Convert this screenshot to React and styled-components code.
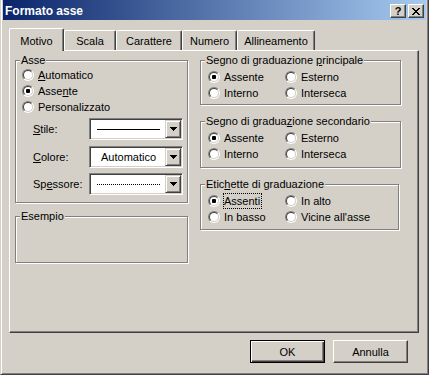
import React from "react";
import styled, { createGlobalStyle } from "styled-components";

const GlobalStyle = createGlobalStyle`
  html, body {
    margin: 0;
    padding: 0;
    background: #d4d0c8;
  }
  body {
    font-family: "Liberation Sans", Arial, sans-serif;
    font-size: 11px;
    color: #000;
  }
`;

const Window = styled.div`
  box-sizing: border-box;
  width: 429px;
  height: 375px;
  background: #d4d0c8;
  border-left: 1px solid #d4d0c8;
  border-right: 1px solid #404040;
  border-bottom: 1px solid #404040;
  box-shadow: inset 1px 0 #fff, inset -1px -1px #808080;
  padding: 0 2px 1px 2px;
  display: flex;
  flex-direction: column;
`;

const TitleBar = styled.div`
  height: 20px;
  display: flex;
  align-items: flex-start;
  padding: 0 2px 0 2px;
  background: linear-gradient(to right, #0a246a, #a6caf0);
`;

const TitleText = styled.div`
  flex: 1;
  padding-top: 3px;
  line-height: 16px;
  font-size: 12px;
  font-weight: bold;
  color: #fff;
`;

const CaptionButton = styled.div`
  box-sizing: border-box;
  width: 16px;
  height: 14px;
  margin-top: 4px;
  margin-left: 2px;
  background: #d4d0c8;
  border: 1px solid;
  border-color: #fff #404040 #404040 #fff;
  box-shadow: inset -1px -1px #808080;
  display: flex;
  align-items: center;
  justify-content: center;
  font-size: 11px;
  font-weight: bold;
  line-height: 12px;
`;

const Body = styled.div`
  flex: 1;
  display: flex;
  flex-direction: column;
  padding: 8px 7px 0 6px;
`;

const TabStrip = styled.div`
  height: 22px;
  display: flex;
  align-items: flex-end;
`;

const Tab = styled.div`
  box-sizing: border-box;
  position: relative;
  z-index: ${(p) => (p.$active ? 1 : 0)};
  width: ${(p) => p.$w}px;
  height: ${(p) => (p.$active ? 23 : 20)}px;
  margin-bottom: ${(p) => (p.$active ? -1 : 0)}px;
  padding-top: ${(p) => (p.$active ? 3 : 1)}px;
  line-height: 18px;
  text-align: center;
  white-space: nowrap;
  background: #d4d0c8;
  border-left: 1px solid #fff;
  border-top: 1px solid #fff;
  border-right: 1px solid #404040;
  border-radius: 2px 2px 0 0;
  box-shadow: inset -1px 0 #808080;
`;

const Panel = styled.div`
  box-sizing: border-box;
  height: 283px;
  display: flex;
  gap: 12px;
  padding: 9px 0 0 5px;
  border-top: 1px solid #fff;
  border-left: 1px solid #fff;
  border-right: 1px solid #404040;
  border-bottom: 1px solid #404040;
  box-shadow: inset -1px -1px #808080;
`;

const Column = styled.div`
  display: flex;
  flex-direction: column;
  gap: ${(p) => p.$gap}px;
`;

const Group = styled.div`
  box-sizing: border-box;
  position: relative;
  width: ${(p) => p.$w}px;
  height: ${(p) => p.$h}px;
  padding: ${(p) => p.$pad || "0"};
  border: 1px solid #808080;
  box-shadow: inset 1px 1px #fff, 1px 1px #fff;
`;

const Legend = styled.div`
  position: absolute;
  top: -7px;
  left: 4px;
  padding: 0 1px;
  line-height: 13px;
  background: #d4d0c8;
  white-space: nowrap;
`;

const RadioGrid = styled.div`
  display: grid;
  grid-template-columns: 77px auto;
  grid-auto-rows: 16px;
`;

const RadioRow = styled.div`
  height: 16px;
  display: flex;
  align-items: center;
  white-space: nowrap;
`;

const RadioOuter = styled.span`
  box-sizing: border-box;
  flex: none;
  width: 12px;
  height: 12px;
  border-radius: 50%;
  border: 1px solid;
  border-color: #808080 #fff #fff #808080;
  display: flex;
`;

const RadioInner = styled.span`
  box-sizing: border-box;
  width: 10px;
  height: 10px;
  border-radius: 50%;
  border: 1px solid;
  border-color: #404040 #d4d0c8 #d4d0c8 #404040;
  background: #fff;
  display: flex;
  align-items: center;
  justify-content: center;
`;

const RadioDot = styled.span`
  width: 4px;
  height: 4px;
  border-radius: 1px;
  background: #000;
`;

const RadioLabel = styled.span`
  box-sizing: border-box;
  margin-left: ${(p) => (p.$focus ? 3 : 4)}px;
  height: 16px;
  line-height: ${(p) => (p.$focus ? 14 : 16)}px;
  padding-right: ${(p) => (p.$focus ? 1 : 0)}px;
  border: ${(p) => (p.$focus ? "1px dotted #000" : "none")};
`;

const FieldRow = styled.div`
  display: flex;
  align-items: center;
  height: 22px;
  margin-top: ${(p) => p.$mt}px;
`;

const FieldLabel = styled.span`
  width: 56px;
  margin-left: 11px;
`;

const Combo = styled.div`
  box-sizing: border-box;
  width: 94px;
  height: 22px;
  display: flex;
  align-items: center;
  background: #fff;
  border: 1px solid;
  border-color: #808080 #fff #fff #808080;
  box-shadow: inset 1px 1px #404040, inset -1px -1px #d4d0c8;
  padding: 1px;
`;

const ComboValue = styled.div`
  flex: 1;
  display: flex;
  align-items: center;
  padding-left: ${(p) => p.$pl || 6}px;
`;

const LineSample = styled.div`
  width: 63px;
  border-top: 1px ${(p) => p.$kind} #000;
`;

const DropButton = styled.div`
  box-sizing: border-box;
  width: 16px;
  height: 18px;
  background: #d4d0c8;
  border: 1px solid;
  border-color: #d4d0c8 #404040 #404040 #d4d0c8;
  box-shadow: inset 1px 1px #fff, inset -1px -1px #808080;
  display: flex;
  align-items: center;
  justify-content: center;
`;

const ButtonRow = styled.div`
  display: flex;
  justify-content: flex-end;
  gap: 8px;
  margin-top: 7px;
  padding-right: 11px;
`;

const Button = styled.div`
  box-sizing: border-box;
  width: 75px;
  height: 23px;
  display: flex;
  align-items: center;
  justify-content: center;
  background: #d4d0c8;
  border: 1px solid;
  border-color: ${(p) => (p.$default ? "#000" : "#fff #404040 #404040 #fff")};
  box-shadow: ${(p) =>
    p.$default
      ? "inset 1px 1px #fff, inset -1px -1px #404040, inset -2px -2px #808080"
      : "inset -1px -1px #808080"};
`;

const Arrow = () => (
  <svg width="7" height="4" viewBox="0 0 7 4" shapeRendering="crispEdges">
    <path d="M0 0h7v1h-1v1h-1v1h-1v1h-1v-1h-1v-1h-1v-1h-1z" fill="#000" />
  </svg>
);

const CloseGlyph = () => (
  <svg width="8" height="7" viewBox="0 0 8 7" shapeRendering="crispEdges">
    <path
      d="M0 0h2v1h1v1h2v-1h1v-1h2v1h-1v1h-1v1h-1v1h1v1h1v1h1v1h-2v-1h-1v-1h-2v1h-1v1h-2v-1h1v-1h1v-1h1v-1h-1v-1h-1v-1h-1z"
      fill="#000"
    />
  </svg>
);

const Radio = ({ checked, focus, children }) => (
  <RadioRow>
    <RadioOuter>
      <RadioInner>{checked && <RadioDot />}</RadioInner>
    </RadioOuter>
    <RadioLabel $focus={focus}>{children}</RadioLabel>
  </RadioRow>
);

const ComboBox = ({ children, pl }) => (
  <Combo>
    <ComboValue $pl={pl}>{children}</ComboValue>
    <DropButton>
      <Arrow />
    </DropButton>
  </Combo>
);

const tabs = [
  { label: "Motivo", w: 55, active: true },
  { label: "Scala", w: 52 },
  { label: "Carattere", w: 66 },
  { label: "Numero", w: 55 },
  { label: "Allineamento", w: 78 },
];

const App = () => {
  return (
    <Window>
      <GlobalStyle />
      <TitleBar>
        <TitleText>Formato asse</TitleText>
        <CaptionButton>?</CaptionButton>
        <CaptionButton>
          <CloseGlyph />
        </CaptionButton>
      </TitleBar>
      <Body>
        <TabStrip>
          {tabs.map((t) => (
            <Tab key={t.label} $w={t.w} $active={t.active}>
              {t.label}
            </Tab>
          ))}
        </TabStrip>
        <Panel>
          <Column $gap={13}>
            <Group $w={173} $h={143} $pad="6px 0 0 6px">
              <Legend>Asse</Legend>
              <Radio>
                <u>A</u>utomatico
              </Radio>
              <Radio checked>
                Asse<u>n</u>te
              </Radio>
              <Radio>Personalizzato</Radio>
              <FieldRow $mt={3}>
                <FieldLabel>
                  <u>S</u>tile:
                </FieldLabel>
                <ComboBox>
                  <LineSample $kind="solid" />
                </ComboBox>
              </FieldRow>
              <FieldRow $mt={6}>
                <FieldLabel>
                  <u>C</u>olore:
                </FieldLabel>
                <ComboBox pl={10}>Automatico</ComboBox>
              </FieldRow>
              <FieldRow $mt={5}>
                <FieldLabel>
                  Sp<u>e</u>ssore:
                </FieldLabel>
                <ComboBox>
                  <LineSample $kind="dotted" />
                </ComboBox>
              </FieldRow>
            </Group>
            <Group $w={173} $h={47}>
              <Legend>Esempio</Legend>
            </Group>
          </Column>
          <Column $gap={16}>
            <Group $w={201} $h={45} $pad="8px 0 0 7px">
              <Legend>
                Segno di graduazione <u>p</u>rincipale
              </Legend>
              <RadioGrid>
                <Radio checked>Assente</Radio>
                <Radio>Esterno</Radio>
                <Radio>Interno</Radio>
                <Radio>Interseca</Radio>
              </RadioGrid>
            </Group>
            <Group $w={201} $h={47} $pad="8px 0 0 7px">
              <Legend>
                Segno di gradua<u>z</u>ione secondario
              </Legend>
              <RadioGrid>
                <Radio checked>Assente</Radio>
                <Radio>Esterno</Radio>
                <Radio>Interno</Radio>
                <Radio>Interseca</Radio>
              </RadioGrid>
            </Group>
            <Group $w={199} $h={46} $pad="8px 0 0 7px">
              <Legend>
                Etic<u>h</u>ette di graduazione
              </Legend>
              <RadioGrid>
                <Radio checked focus>
                  Assenti
                </Radio>
                <Radio>In alto</Radio>
                <Radio>In basso</Radio>
                <Radio>Vicine all'asse</Radio>
              </RadioGrid>
            </Group>
          </Column>
        </Panel>
        <ButtonRow>
          <Button $default>OK</Button>
          <Button>Annulla</Button>
        </ButtonRow>
      </Body>
    </Window>
  );
};

export default App;
